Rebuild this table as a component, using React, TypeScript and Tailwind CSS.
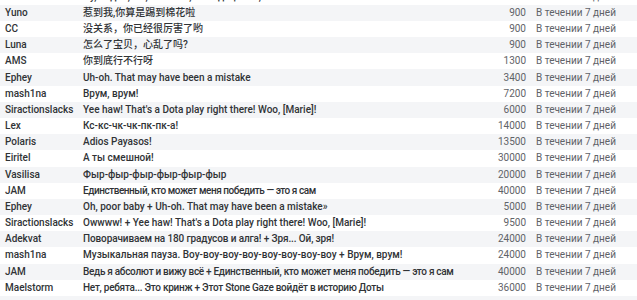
import React from "react";

// [name, message, price, message tracking]
const ROWS: [string, string, number, string][] = [
  ["", "Ну, ладно, ты, конечно, молодец + Ой, всё", 2400, ""],
  ["Yuno", "惹到我,你算是踢到棉花啦", 900, ""],
  ["CC", "没关系，你已经很厉害了哟", 900, ""],
  ["Luna", "怎么了宝贝，心乱了吗?", 900, ""],
  ["AMS", "你到底行不行呀", 1300, ""],
  ["Ephey", "Uh-oh. That may have been a mistake", 3400, ""],
  ["mash1na", "Врум, врум!", 7200, ""],
  ["Siractionslacks", "Yee haw! That's a Dota play right there! Woo, [Marie]!", 6000, ""],
  ["Lex", "Кс-кс-чк-чк-пк-пк-а!", 14000, ""],
  ["Polaris", "Adios Payasos!", 13500, ""],
  ["Eiritel", "А ты смешной!", 30000, ""],
  ["Vasilisa", "Фыр-фыр-фыр-фыр-фыр-фыр", 20000, ""],
  ["JAM", "Единственный, кто может меня победить — это я сам", 40000, "tracking-[-0.45px]"],
  ["Ephey", "Oh, poor baby + Uh-oh. That may have been a mistake»", 5000, ""],
  ["Siractionslacks", "Owwww! + Yee haw! That's a Dota play right there! Woo, [Marie]!", 9500, ""],
  ["Adekvat", "Поворачиваем на 180 градусов и алга! + Зря... Ой, зря!", 24000, "tracking-[-0.12px]"],
  ["mash1na", "Музыкальная пауза. Воу-воу-воу-воу-воу-воу-воу-воу + Врум, врум!", 24000, ""],
  ["JAM", "Ведь я абсолют и вижу всё + Единственный, кто может меня победить — это я сам", 40000, "tracking-[-0.3px]"],
  ["Maelstorm", "Нет, ребята... Это кринж + Этот Stone Gaze войдёт в историю Доты", 36000, "tracking-[-0.26px]"],
  ["", "", 0, ""],
];

export default function App() {
  return (
    <div className="h-[300px] w-[637px] overflow-hidden bg-white font-['Roboto','Noto_Sans_CJK_SC',sans-serif] text-[10px]">
      <div className="mt-[-11.4px]">
        {ROWS.map(([name, msg, price, tr], i) => (
          <div key={i} className={`flex h-[16.18px] items-center leading-none ${i % 2 === 1 ? "bg-[#f4f5f7]" : "bg-white"}`}>
            <div className="w-[78px] shrink-0 pl-[5px] font-medium text-[#303336] whitespace-nowrap">{name}</div>
            <div className={`min-w-0 flex-1 px-[5px] font-medium text-[#303336] whitespace-nowrap ${tr}`}>{msg}</div>
            <div className="w-[60px] shrink-0 pr-[5px] text-right text-[#5f6368]">{price ? price : ""}</div>
            <div className="w-[106px] shrink-0 pl-[5px] text-[#5f6368] whitespace-nowrap">{price ? "В течении 7 дней" : ""}</div>
          </div>
        ))}
      </div>
    </div>
  );
}
